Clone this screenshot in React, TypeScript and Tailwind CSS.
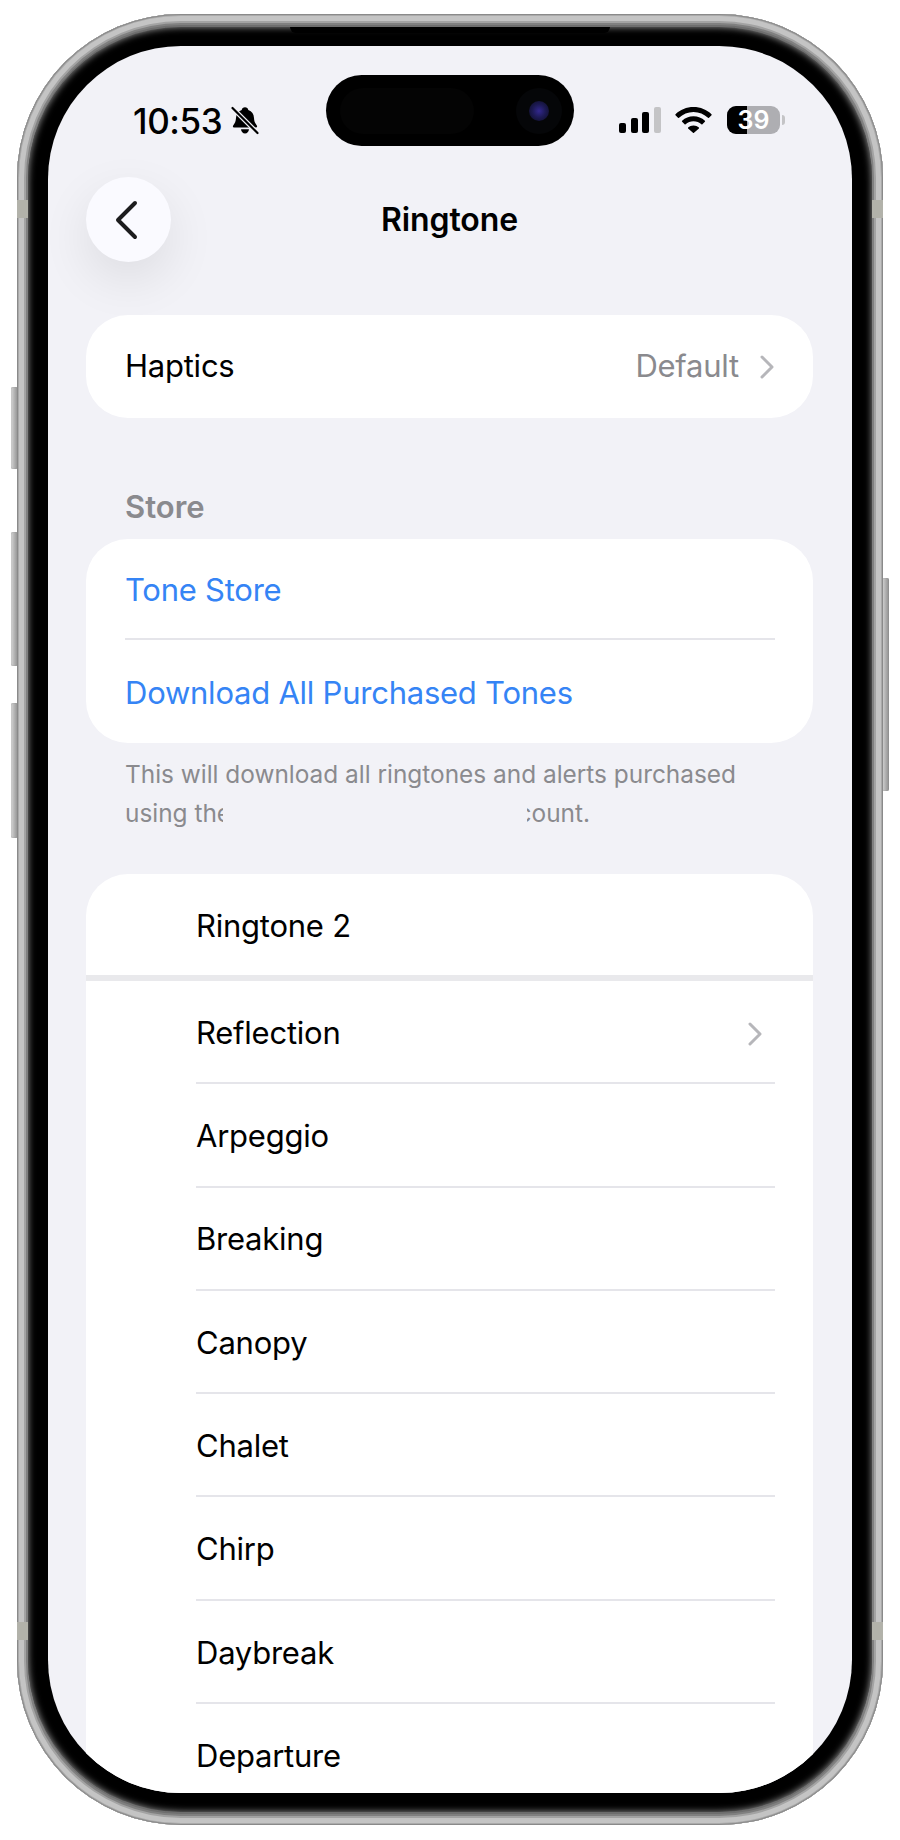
import React from "react";

const tones = ["Arpeggio", "Breaking", "Canopy", "Chalet", "Chirp", "Daybreak", "Departure"];

function Chevron({ className }: { className?: string }) {
  return (
    <svg viewBox="0 0 16 24" className={className} fill="none" stroke="#b6b6ba" strokeWidth="3" strokeLinecap="round" strokeLinejoin="round">
      <path d="M3 2l10 10L3 22" />
    </svg>
  );
}

function BellSlash() {
  return (
    <svg viewBox="0 0 28 28" className="w-[28px] h-[29px] ml-[9px] shrink-0" fill="#000">
      {/* bell body */}
      <path d="M14 .8c1.800 0 3 1.100 3.300 2.600 3.700 1.100 5.500 4.100 5.700 8.200.2 3.500 1.100 5.400 2.800 7.300.7.800.2 2.100-.9 2.100H3.100c-1.100 0-1.600-1.300-.9-2.100 1.700-1.900 2.600-3.800 2.800-7.300.2-4.100 2-7.100 5.700-8.200C11 1.900 12.200.8 14 .8z" />
      <path d="M10 22.800h8c-.2 2.400-1.900 4.200-4 4.200s-3.800-1.800-4-4.200z" />
      {/* slash */}
      <path d="M1 1l26 26" stroke="#f2f2f7" strokeWidth="4.600" />
      <path d="M1.500 1.500l25 25" stroke="#000" strokeWidth="2.200" strokeLinecap="round" />
    </svg>
  );
}

function Signal() {
  return (
    <div className="flex items-end gap-[4.6px] h-[26px]">
      <div className="w-[7px] h-[10px] rounded-[2px] bg-black" />
      <div className="w-[7px] h-[15px] rounded-[2px] bg-black" />
      <div className="w-[7px] h-[21px] rounded-[2px] bg-black" />
      <div className="w-[7px] h-[26px] rounded-[2px] bg-[#c4c4c6]" />
    </div>
  );
}

function Wifi() {
  return (
    <svg viewBox="0 0 37 26" className="w-[37px] h-[26px] ml-[14px]" fill="#000">
      <path d="M18.500 0C11.500 0 5.200 2.700.5 7.200c-.3.300-.3.700 0 1l2.500 2.600c.3.300.7.300 1 0C7.800 7.300 12.900 5 18.500 5s10.700 2.300 14.500 5.800c.3.300.7.300 1 0l2.500-2.600c.3-.3.300-.7 0-1C31.800 2.700 25.500 0 18.500 0z" />
      <path d="M18.500 9.300c-4.400 0-8.400 1.700-11.400 4.400-.3.300-.3.700 0 1l2.500 2.600c.3.300.7.300 1 0 2.100-1.800 4.900-3 7.900-3s5.800 1.200 7.900 3c.3.300.7.300 1 0l2.500-2.600c.3-.3.300-.7 0-1-3-2.700-7-4.400-11.400-4.400z" />
      <path d="M18.500 18.400c-2.100 0-4 .7-5.400 2-.3.300-.3.700 0 1l4.900 4.400c.3.300.7.300 1 0l4.900-4.400c.3-.3.300-.7 0-1-1.400-1.300-3.300-2-5.400-2z" />
    </svg>
  );
}

function Battery() {
  return (
    <div className="flex items-center ml-[15px]">
      <div className="relative w-[53px] h-[28px] rounded-[9px] bg-[#aeaeb2] flex items-center justify-center">
        <div className="absolute left-0 top-0 bottom-0 w-[20px] rounded-l-[9px] bg-black" />
        <span className="relative text-white text-[25px] leading-none font-semibold">39</span>
      </div>
      <div className="w-[3px] h-[10px] ml-[2px] rounded-r-full bg-[#c4c4c6]" />
    </div>
  );
}

function SideButton({ className }: { className: string }) {
  return <div className={"absolute w-[7px] rounded-[2px] bg-gradient-to-r from-[#d6d6d6] to-[#8f8f8f] shadow-[inset_0_0_1px_#777] " + className} />;
}

export default function App() {
  return (
    <div className="relative w-[900px] h-[1840px] overflow-hidden bg-white pl-[17px] pr-[17px] pt-[14px] pb-[15px] font-['Inter',sans-serif]">
      {/* side buttons */}
      <SideButton className="left-[11px] top-[387px] h-[82px]" />
      <SideButton className="left-[11px] top-[532px] h-[134px]" />
      <SideButton className="left-[11px] top-[703px] h-[135px]" />
      <SideButton className="right-[11px] top-[578px] h-[213px]" />

      {/* metal frame */}
      <div className="relative h-full rounded-[164px] bg-[#b0b0b0] px-[11px] py-[13px] shadow-[inset_0_0_0_1px_#8a8a8a,inset_0_0_0_2px_#aaaaaa,inset_0_0_0_7px_#c4c4c4,inset_0_0_0_9px_#a3a3a3,inset_0_0_0_11px_#808080,inset_0_0_0_13px_#6e6e6e]">
        {/* antenna bands */}
        <div className="absolute left-0 top-[186px] w-[11px] h-[18px] bg-[#b2b2aa]" />
        <div className="absolute right-0 top-[186px] w-[11px] h-[18px] bg-[#b2b2aa]" />
        <div className="absolute left-0 top-[1608px] w-[11px] h-[18px] bg-[#b2b2aa]" />
        <div className="absolute right-0 top-[1608px] w-[11px] h-[18px] bg-[#b2b2aa]" />

        {/* black bezel */}
        <div className="relative h-full rounded-[153px] bg-black px-[20px] py-[19px] shadow-[inset_0_0_7px_#9a9a9a]">
          {/* speaker strip */}
          <div className="absolute left-[262px] top-0 w-[320px] h-[6px] rounded-b-[6px] bg-black" />

          {/* screen */}
          <div className="relative h-full rounded-[133px] overflow-hidden bg-[#f2f2f7] flex flex-col">
            {/* dynamic island */}
            <div className="absolute left-[278px] top-[29px] w-[248px] h-[71px] rounded-full bg-black flex items-center justify-end">
              <div className="absolute left-[14px] top-[13px] w-[134px] h-[46px] rounded-[23px] bg-[#040404]" />
              <div className="relative mr-[12px] w-[46px] h-[46px] rounded-full bg-[#050608] flex items-center justify-center">
                <div className="w-[20px] h-[20px] rounded-full bg-[radial-gradient(circle,#33288f_0%,#1d1a55_45%,#0b0b1c_100%)]" />
              </div>
            </div>

            {/* status bar */}
            <div className="flex items-center h-[56px] mt-[46px] pl-[85px] pr-[67px] shrink-0">
              <span className="text-[35px] leading-none font-medium text-black tracking-[-0.4px] pt-[2px]">10:53</span>
              <BellSlash />
              <div className="flex-1" />
              <Signal />
              <Wifi />
              <Battery />
            </div>

            {/* nav */}
            <div className="flex items-center mt-[29px] pl-[38px] pr-[39px] shrink-0">
              <button className="w-[85px] h-[85px] rounded-full bg-[#fafaff] flex items-center justify-center shadow-[0_18px_50px_rgba(0,0,0,0.09)]">
                <svg viewBox="0 0 24 40" className="w-[24px] h-[40px] -ml-[6px]" fill="none" stroke="#1c1c1e" strokeWidth="4" strokeLinecap="round" strokeLinejoin="round">
                  <path d="M21 3L4 20l17 17" />
                </svg>
              </button>
              <h1 className="flex-1 text-center text-[32px] font-semibold tracking-[-0.1px] text-black">Ringtone</h1>
              <div className="w-[85px]" />
            </div>

            {/* content */}
            <div className="pl-[38px] pr-[39px] mt-[53px] flex flex-col text-[31px] tracking-[-0.24px]">
              <div className="h-[103px] rounded-[42px] bg-white flex items-center pl-[39px] pr-[38px] shrink-0">
                <span className="text-black">Haptics</span>
                <span className="ml-auto text-[#8a8a8e]">Default</span>
                <Chevron className="w-[16px] h-[24px] ml-[20px]" />
              </div>

              <div className="mt-[67px] pl-[39px] pt-[2px] text-[31px] tracking-normal leading-[40px] font-semibold text-[#8a8a8e] h-[54px]">Store</div>

              <div className="rounded-[42px] bg-white pl-[39px] pr-[38px] shrink-0">
                <div className="h-[101px] pt-[4px] flex items-center border-b-2 border-[#e5e5ea] text-[#3584f5]">Tone Store</div>
                <div className="h-[103px] pt-[4px] flex items-center text-[#3584f5]">Download All Purchased Tones</div>
              </div>

              <div className="mt-[12px] pl-[39px] text-[24.4px] tracking-normal leading-[39px] text-[#8a8a8e] h-[119px]">
                <p className="whitespace-nowrap">This will download all ringtones and alerts purchased</p>
                <div className="flex whitespace-nowrap">
                  <span className="w-[98px] overflow-hidden">using the</span>
                  <span className="w-[304px]" />
                  <span className="w-[63px] overflow-hidden flex justify-end">account.</span>
                </div>
              </div>

              <div className="rounded-t-[42px] bg-white shrink-0">
                <div className="h-[101px] pt-[4px] flex items-center pl-[110px] text-black">Ringtone 2</div>
                <div className="h-[6px] bg-[#e9e9ec]" />
                <div className="ml-[110px] mr-[38px]">
                  <div className="h-[103.3px] pt-[4px] flex items-center justify-between border-b-2 border-[#e5e5ea] text-black">
                    <span>Reflection</span>
                    <Chevron className="w-[16px] h-[24px] mr-[12px]" />
                  </div>
                  {tones.map((name) => (
                    <div key={name} className="h-[103.3px] pt-[3px] flex items-center border-b-2 border-[#e5e5ea] text-black">
                      {name}
                    </div>
                  ))}
                </div>
              </div>
            </div>
          </div>
        </div>
      </div>
    </div>
  );
}
